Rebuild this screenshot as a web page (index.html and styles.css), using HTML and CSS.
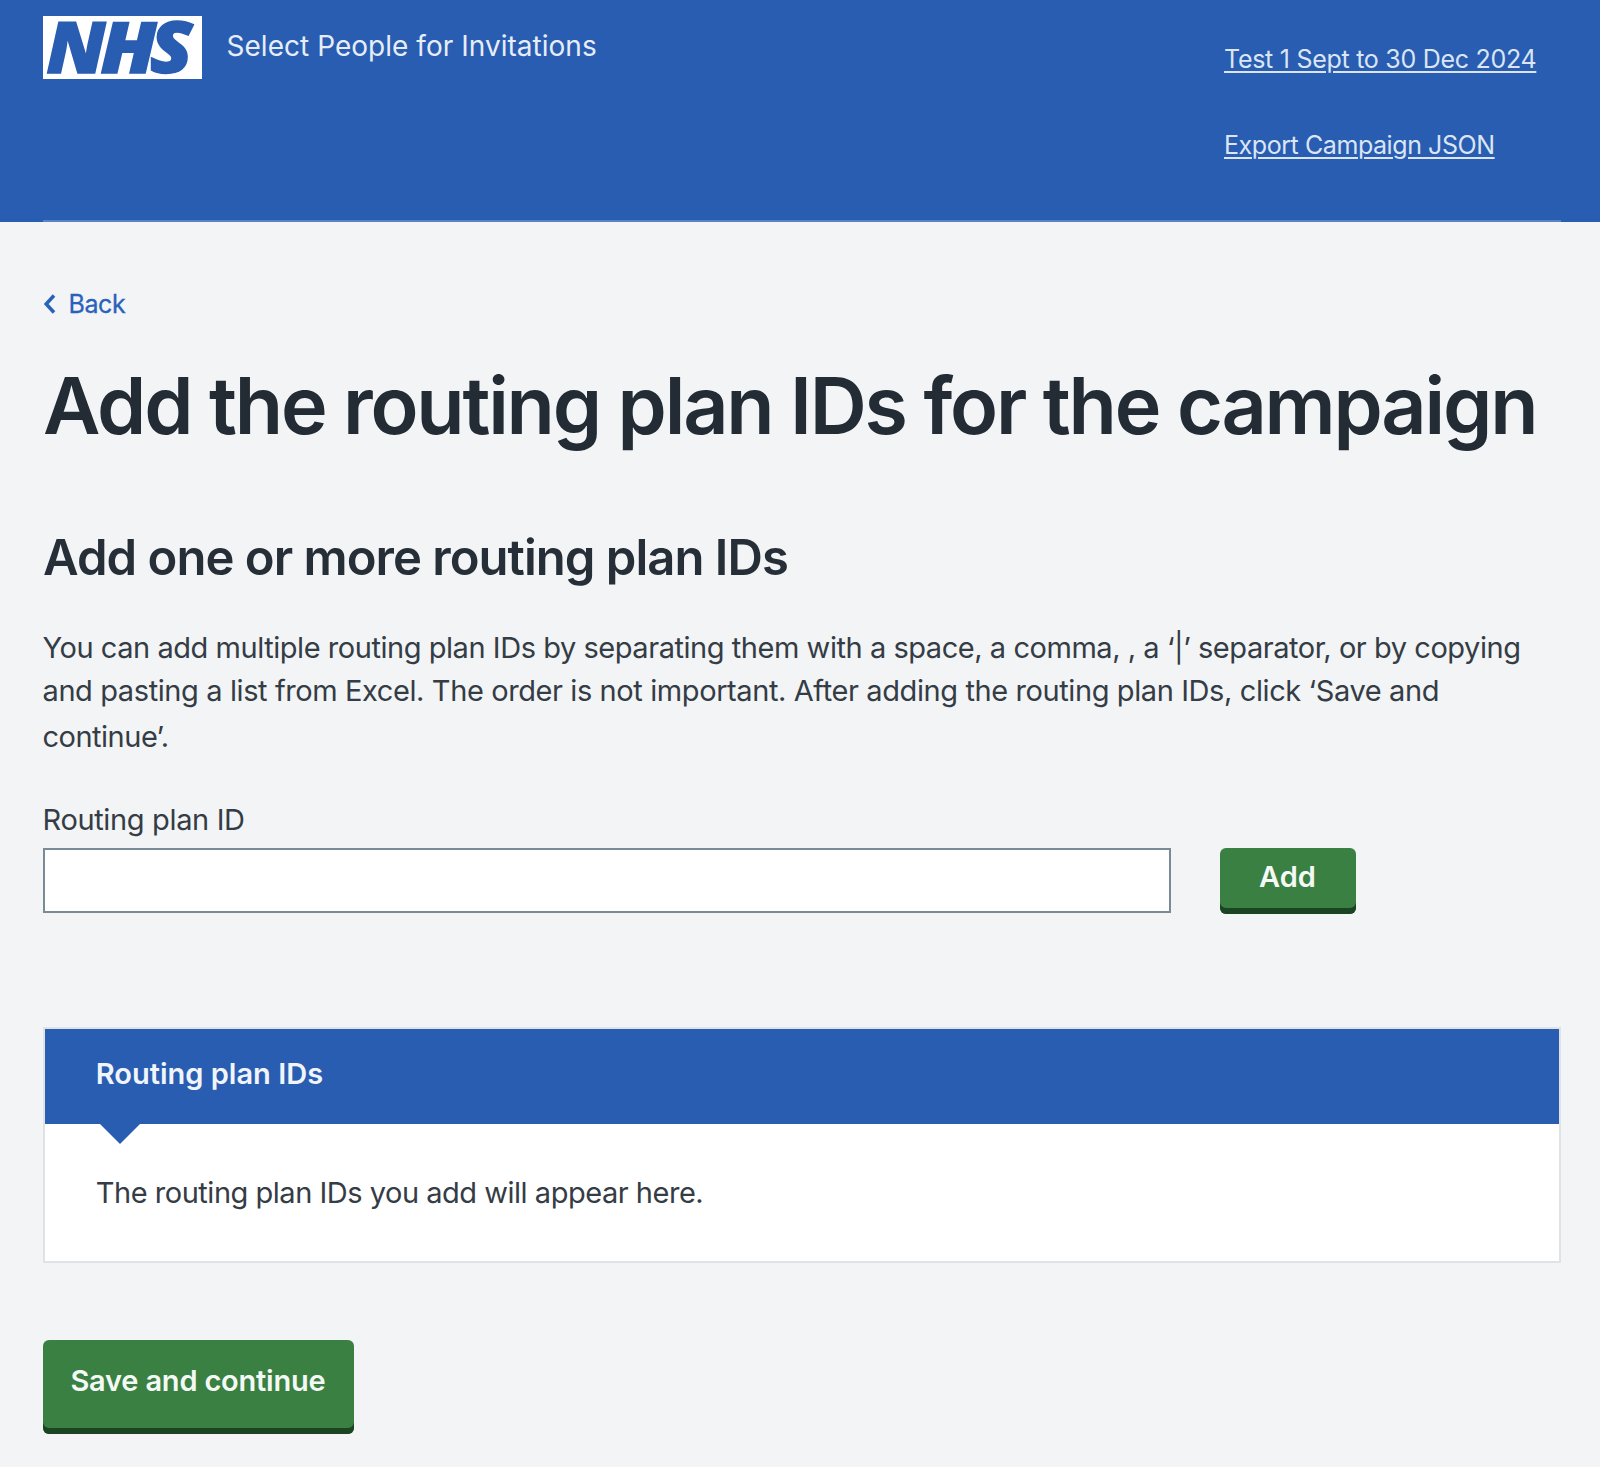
FILE: index.html
```html
<!DOCTYPE html>
<html lang="en">
<head>
<meta charset="utf-8">
<title>Add the routing plan IDs for the campaign</title>
<link rel="stylesheet" href="styles.css">
</head>
<body>
<div class="page">
  <header class="header">
    <div class="header-inner">
      <a class="logo" aria-label="NHS">
        <svg width="159" height="63" viewBox="0 0 159 63">
          <rect class="logo-box" width="159" height="63"/>
          <g class="logo-text">
            <text x="3.500" y="57" textLength="59" lengthAdjust="spacingAndGlyphs">N</text>
            <text x="57.500" y="57" textLength="56" lengthAdjust="spacingAndGlyphs">H</text>
            <text x="107" y="57" textLength="42.500" lengthAdjust="spacingAndGlyphs">S</text>
          </g>
        </svg>
      </a>
      <span class="service">Select People for Invitations</span>
      <nav class="links">
        <a class="campaign-link" href="#">Test 1 Sept to 30 Dec 2024</a>
        <a class="export-link" href="#">Export Campaign JSON</a>
      </nav>
    </div>
  </header>
  <main class="main">
    <a class="back" href="#">
      <svg class="chevron" width="13" height="20" viewBox="0 0 13 20"><path d="M11 1.500 3.200 10l7.800 8.500"/></svg>
      <span>Back</span>
    </a>
    <h1 class="title">Add the routing plan IDs for the campaign</h1>
    <h2 class="subtitle">Add one or more routing plan IDs</h2>
    <p class="intro">
      <span class="line first">You can add multiple routing plan IDs by separating them with a space, a comma, , a ‘|’ separator, or by copying</span>
      <span class="line">and pasting a list from Excel. The order is not important. After adding the routing plan IDs, click ‘Save and</span>
      <span class="line last">continue’.</span>
    </p>
    <label class="label" for="plan">Routing plan ID</label>
    <div class="form-row">
      <input class="input" id="plan" type="text">
      <button class="button add">Add</button>
    </div>
    <section class="card">
      <h3 class="card-title">Routing plan IDs</h3>
      <p class="card-text">The routing plan IDs you add will appear here.</p>
    </section>
    <button class="button save">Save and continue</button>
  </main>
</div>
</body>
</html>
```
FILE: styles.css
```css
* { box-sizing: border-box; }
body { margin: 0; background: #fff; color: #262e37; font-family: Inter, "Liberation Sans", sans-serif; }
h1, h2, h3, p { margin: 0; }
.page { height: 1467px; background: #f2f4f6; }
.header { height: 222px; padding: 0 39px 0 42.500px; background: #285db1; }
.header-inner { display: flex; height: 222px; border-bottom: 2px solid #5983c4; }
.logo { margin-top: 16px; height: 63px; }
.logo svg { display: block; overflow: visible; }
.logo-box { fill: #fff; }
.logo-text { fill: #285db1; stroke: #285db1; stroke-width: 1.500; font: italic 800 71px "Open Sans", "Noto Sans", sans-serif; }
.service { margin: 26px 0 0 25px; font-size: 28px; line-height: 40px; letter-spacing: 0.030px; color: #e6edf7; }
.links { display: flex; flex-direction: column; gap: 46px; width: 337px; margin: 39px 0 0 auto; font-size: 25px; line-height: 41px; }
.links a { color: #dbe5f3; text-decoration-thickness: 2px; text-underline-offset: 3px; }
.links a + a { margin-top: -1px; }
.campaign-link { letter-spacing: -0.280px; }
.export-link { letter-spacing: -0.430px; }
.main { display: flex; flex-direction: column; align-items: flex-start; padding: 67px 39px 0 42.500px; }
.back { display: flex; align-items: center; gap: 13px; height: 30px; font-size: 25px; line-height: 30px; letter-spacing: -0.400px; color: #2a62ba; text-decoration: none; -webkit-text-stroke: 0.300px #2a62ba; }
.chevron { fill: none; stroke: #2a62ba; stroke-width: 3.500; }
.title { margin: 41px 0 0 0.500px; font-size: 79px; line-height: 90px; font-weight: 600; letter-spacing: -2.220px; white-space: nowrap; color: #232b34; }
.subtitle { margin: 78px 0 0 0.500px; font-size: 49px; line-height: 60px; font-weight: 600; letter-spacing: -0.970px; }
.intro { margin-top: 38px; }
.intro, .label, .card-text { font-size: 29px; line-height: 43px; letter-spacing: -0.400px; white-space: nowrap; color: #343c45; }
.line { display: block; }
.first { letter-spacing: -0.455px; }
.last { margin-top: 3px; letter-spacing: -0.500px; }
.label { margin-top: 40px; letter-spacing: -0.350px; }
.form-row { display: flex; gap: 49px; margin-top: 7px; }
.input { width: 1128px; height: 65px; border: 2px solid #7b8a97; border-radius: 0; background: #fff; }
.button { padding: 0; border: 0; border-radius: 6px; background: #398042; box-shadow: inset 0 -6px #1b4423; color: #f4f9f5; font: 600 29px/40px Inter, "Liberation Sans", sans-serif; white-space: nowrap; }
.add { width: 136px; height: 66px; padding-bottom: 8px; }
.save { width: 311px; height: 94px; margin-top: 77px; padding-bottom: 12px; letter-spacing: -0.200px; }
.card { width: 1518.500px; height: 236px; margin-top: 113px; border: 2px solid #e0e3e6; background: #fff; }
.card-title { position: relative; height: 95px; padding: 22px 0 0 51.300px; background: #285db1; color: #f1f5fb; font-size: 29px; line-height: 46px; font-weight: 600; }
.card-title::after { content: ""; position: absolute; left: 55px; top: 95px; border: 20.500px solid transparent; border-top-color: #285db1; border-bottom: 0; }
.card-text { padding: 47px 0 0 51.300px; letter-spacing: -0.480px; }
```
